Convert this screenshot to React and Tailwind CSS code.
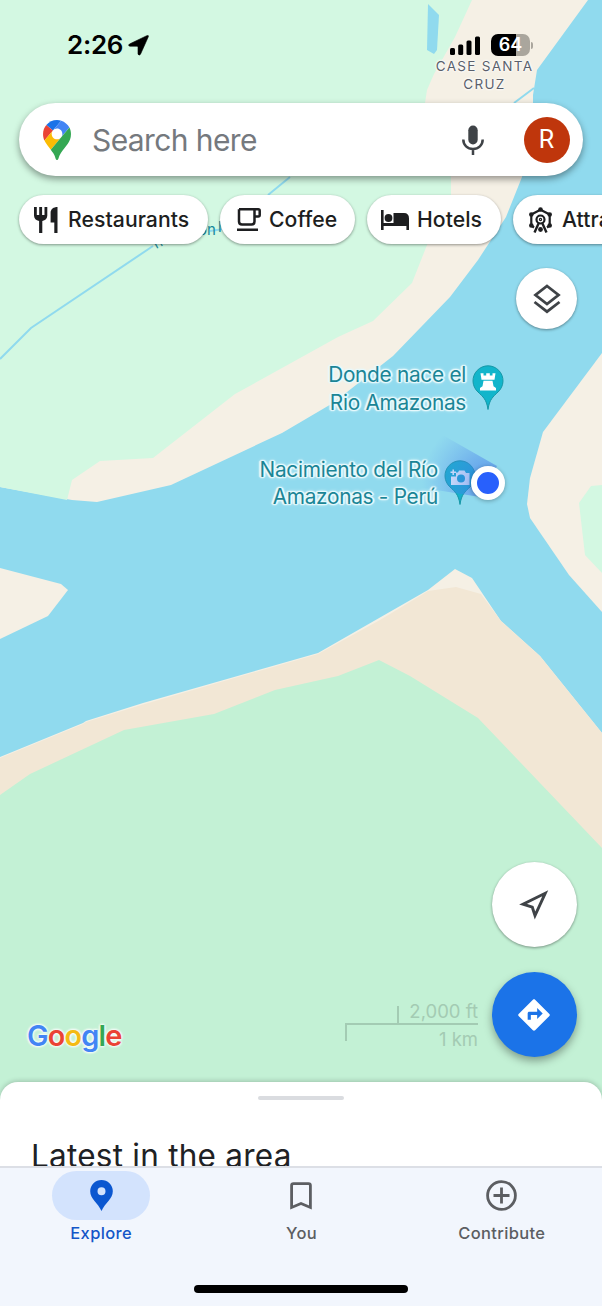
const LABEL = "font-['Inter',sans-serif]";

function MapCanvas() {
  return (
    <svg className="absolute inset-0" width="602" height="1306" viewBox="0 0 602 1306">
      <defs>
        <radialGradient id="beam" gradientUnits="userSpaceOnUse" cx="488" cy="483" r="66">
          <stop offset="0" stopColor="#3b6fe8" stopOpacity="0.65" />
          <stop offset="0.45" stopColor="#4a80ea" stopOpacity="0.4" />
          <stop offset="1" stopColor="#5a90f0" stopOpacity="0" />
        </radialGradient>
      </defs>
      <rect width="602" height="1306" fill="#90daee" />
      <path d="M0 0H588L537 70L533 95V103L522 177L506 217L478 260L450 297L393 356L333 403L282 433L171 485L97 502L72 500L0 487Z" fill="#f5f0e5" />
      <path d="M0 0H472L455 37L434 74L427 90L425 103L451 177V195L427 245L412 283L373 321L338 337L235 394L153 458L100 461L72 480L67 500L0 487Z" fill="#d3f8e2" />
      <path d="M428 4L439 15L437 50L434 54L427 50Z" fill="#90daee" />
      <path d="M0 359L31 328L153 246M210 231L224 229M268 195L290 177M514 103L534 88" fill="none" stroke="#90daee" strokeWidth="2" />
      <path d="M602 353L543 432L530 478L527 504L530 518L569 575L602 612Z" fill="#f5f0e5" />
      <path d="M602 485L591 486L579 503L585 555L602 573Z" fill="#d3f8e2" />
      <path d="M0 568L61 584L68 590L48 616L0 639Z" fill="#f5f0e5" />
      <path d="M0 757L83 723L86 721L143 703L318 653L428 590L455 569L472 578L501 621L540 656L602 733V900H0Z" fill="#f5f0e5" />
      <path d="M0 758L83 724L86 722L143 704.500L200 688L318 654L380 620L428 591L456 587L481 594L501 621L540 656L602 733V900H0Z" fill="#f2e7d5" />
      <path d="M0 795L30 774L124 730L214 714L275 690L338 676L379 660L410 676L478 718L602 848V1306H0Z" fill="#c3f1d5" />

      <g transform="translate(488 366)">
        <path d="M0 43.500C-1.500 33 -5 31 -10 26A15 15 0 1 1 10 26C5 31 1.500 33 0 43.500Z" fill="#12b5cb" stroke="#1697a6" strokeWidth="1" />
        <path d="M-7.500 7.300h3v2.200h2.700V7.300h3.600v2.200h2.700V7.300h3l-1 6.400h-13ZM-4.500 14.700h9L5.500 20.300L8 22V24.500H-8V22L-5.500 20.300Z" fill="#fff" />
      </g>
      <g transform="translate(460 461)">
        <path d="M0 43.500C-1.500 33 -5 31 -10 26A15 15 0 1 1 10 26C5 31 1.500 33 0 43.500Z" fill="#14b0cb" stroke="#1697a6" strokeWidth="1" />
        <path d="M-9 15.500H-4V11.500H-2L-1 9.500H4.500L6 12H9.500V24H-9Z" fill="#fff" />
        <path d="M-6.800 8.500v5.600M-9.500 11.300h5.500" stroke="#fff" strokeWidth="1.500" />
        <circle cx="1" cy="17.500" r="4" fill="#14a6cb" />
      </g>
      <path d="M488 483L497 466L425 425L405 485L480 497Z" fill="url(#beam)" />
    </svg>
  );
}

function MapLabels() {
  const halo = "[text-shadow:0_0_2px_#e8f9fc,0_0_3px_#e8f9fc,0_0_4px_#e8f9fc,1px_1px_1px_#e8f9fc,-1px_-1px_1px_#e8f9fc,1px_-1px_1px_#e8f9fc,-1px_1px_1px_#e8f9fc,2px_0_1px_#e8f9fc,-2px_0_1px_#e8f9fc]";
  const softHalo = "[text-shadow:0_0_2px_#fff,0_0_3px_#fff,0_0_3px_#fff]";
  return (
    <div className={`absolute inset-0 ${LABEL}`}>
      <div className={`absolute left-[426px] top-[58px] w-[117px] text-center text-[13.500px] leading-[17.500px] tracking-[1.300px] text-[#5a5f6b] ${softHalo}`}>
        CASE SANTA
        <br />
        CRUZ
      </div>
      <div className="absolute left-[198px] top-[221px] text-[15px] leading-[18px] text-[#168a9c]">on</div>
      <div className="absolute left-[218px] top-[218px] text-[15px] leading-[18px] text-[#168a9c]">l</div>
      <div className="absolute left-[151px] top-[235px] -rotate-[28deg] text-[13px] leading-[16px] text-[#168a9c]">Tr</div>
      <div className={`absolute right-[136px] top-[361px] whitespace-nowrap text-right text-[20.800px] leading-[27.500px] tracking-[-0.280px] text-[#1a8596] ${halo}`}>
        Donde nace el
        <br />
        Rio Amazonas
      </div>
      <div className={`absolute right-[164px] top-[456px] whitespace-nowrap text-right text-[20.800px] leading-[27px] tracking-[-0.280px] text-[#1a8596] ${halo}`}>
        Nacimiento del Río
        <br />
        Amazonas - Perú
      </div>
      <div className="absolute left-[471px] top-[466px] size-[34px] rounded-full border-[6.500px] border-white bg-[#2860fc] shadow-[0_1px_4px_rgba(0,0,0,0.3)]" />
    </div>
  );
}

function StatusBar() {
  return (
    <header className="flex h-[103px] shrink-0 items-start justify-between pl-[67px] pr-[69px] pt-[31px]">
      <div className="flex items-center gap-[5px] font-['Inter',sans-serif] text-[26px] font-semibold leading-[28px] text-black">
        <span className="tracking-[-0.300px]">2:26</span>
        <svg width="21" height="21" viewBox="0 0 21 21">
          <path d="M20.300 1.800L12.500 19.200Q11.300 21 10 19.200V12.200Q10 11.200 9 11.200H1.800Q-0.500 10.500 1.500 9L18.800 0.700Q21 0 20.300 1.800Z" fill="#000" stroke="#000" strokeWidth="0.600" />
        </svg>
      </div>
      <div className="flex items-center gap-[11px] pt-[3px]">
        <svg width="30" height="20" viewBox="0 0 30 20">
          <rect x="0" y="13" width="5" height="7" rx="1.500" />
          <rect x="8.200" y="9.500" width="5" height="10.500" rx="1.500" />
          <rect x="16.500" y="5.500" width="5" height="14.500" rx="1.500" />
          <rect x="25" y="1.500" width="5" height="18.500" rx="1.500" />
        </svg>
        <div className="flex items-center gap-[1px]">
          <div className="flex h-[22px] w-[39px] items-center justify-center rounded-[7px] bg-[linear-gradient(90deg,#000_64%,#aaa69d_64%)] font-['Inter',sans-serif] text-[18px] font-semibold leading-none text-white">
            64
          </div>
          <div className="h-[7px] w-[2px] rounded-r-full bg-[#aaa69d]" />
        </div>
      </div>
    </header>
  );
}

function MapsLogo() {
  return (
    <svg width="28" height="40" viewBox="0 0 92.300 132.300">
      <path fill="#1a73e8" d="M60.200 2.200C55.800.8 51 0 46.100 0 32 0 19.300 6.400 10.800 16.500l21.800 18.300L60.200 2.200z" />
      <path fill="#ea4335" d="M10.800 16.500C4.100 24.500 0 34.900 0 46.100c0 8.700 1.700 15.700 4.600 22l28-33.300-21.800-18.300z" />
      <path fill="#4285f4" d="M46.200 28.500c9.800 0 17.700 7.900 17.700 17.700 0 4.300-1.600 8.300-4.200 11.400 0 0 13.900-16.600 27.500-32.700-5.600-10.800-15.300-19-27-22.700L32.600 34.800c3.300-3.800 8.100-6.300 13.600-6.300" />
      <path fill="#fbbc04" d="M46.200 63.800c-9.800 0-17.700-7.900-17.700-17.700 0-4.300 1.500-8.300 4.100-11.300l-28 33.300c4.800 10.600 12.800 19.200 21 29.900l34.100-40.500c-3.300 3.900-8.100 6.300-13.500 6.300" />
      <path fill="#34a853" d="M59.100 109.200c15.400-24.100 33.300-35 33.300-63 0-7.700-1.900-14.900-5.200-21.300L25.600 98c2.600 3.400 5.300 7.300 7.900 11.300 9.400 14.500 6.800 23.100 12.800 23.100s3.400-8.700 12.800-23.200" />
    </svg>
  );
}

function SearchBar() {
  return (
    <div className="mx-[19px] flex h-[73px] shrink-0 items-center rounded-full bg-white pl-[24px] pr-[13px] shadow-[0_3px_7px_rgba(0,0,0,0.4)]">
      <MapsLogo />
      <span className={`ml-[21px] flex-1 text-[30px] leading-[38px] tracking-[-0.600px] text-[#75797e] ${LABEL}`}>Search here</span>
      <svg width="22" height="30" viewBox="0 0 22 30" fill="none" className="mr-[40px]">
        <rect x="6.300" y="0.500" width="9.400" height="19" rx="4.700" fill="#3f4347" />
        <path d="M1.300 14.500C1.300 20 5.500 24 11 24S20.700 20 20.700 14.500M11 24V30" stroke="#3f4347" strokeWidth="2.500" />
      </svg>
      <div className="flex size-[46px] items-center justify-center rounded-full bg-[#bf360c] pr-px font-['Roboto',sans-serif] text-[25px] text-white">R</div>
    </div>
  );
}

function ForkIcon() {
  return (
    <svg width="24" height="26" viewBox="0 0 24 26">
      <path d="M0 0h2.800v8h2.400V0h2.900v8h2.400V0h2.800v8.500c0 3-2 5-5 5.400V26H5.100V13.900C2 13.500 0 11.500 0 8.500ZM23.500 0v26h-3.200V15.500H16.600V6c0-4 3-6 6.900-6Z" fill="#1d1e20" />
    </svg>
  );
}
function CupIcon() {
  return (
    <svg width="24" height="23" viewBox="0 0 24 23" fill="none" stroke="#1d1e20" strokeWidth="2.500">
      <path d="M2 1.300H21.200Q22.700 1.300 22.700 2.800V7Q22.700 8.500 21.200 8.500H17.500M17.500 1.300V13.500Q17.500 16.500 14.500 16.500H5Q2 16.500 2 13.500V1.300M0 21.700H21" />
    </svg>
  );
}
function BedIcon() {
  return (
    <svg width="28" height="20" viewBox="0 0 28 20" fill="#1d1e20">
      <path d="M0 0h2.600v13H12.500V3h10.500Q28 3 28 8.500V20h-2.600v-4H2.600v4H0Z" />
      <circle cx="7.500" cy="8" r="3.900" />
    </svg>
  );
}
function WheelIcon() {
  return (
    <svg width="25" height="26" viewBox="0 0 24 26" fill="none" stroke="#1d1e20" strokeWidth="2.200">
      <path d="M5.500 20.500L2.800 18.500V7.500L12 2.700L21.200 7.500V18.500L18.500 20.500" />
      <circle cx="12" cy="12.500" r="4" />
      <circle cx="12" cy="12.500" r="0.600" />
      <path d="M10.500 15.500L6 25.500M13.500 15.500L18 25.500" strokeWidth="2.400" />
      <g fill="#1d1e20" stroke="none">
        <circle cx="12" cy="2.500" r="2.300" />
        <circle cx="2.800" cy="7.500" r="2.300" />
        <circle cx="21.200" cy="7.500" r="2.300" />
        <circle cx="2.800" cy="18.500" r="2.300" />
        <circle cx="21.200" cy="18.500" r="2.300" />
        <circle cx="12" cy="22.500" r="2.400" />
      </g>
    </svg>
  );
}

function Chip({ icon, label, className }) {
  return (
    <button className={`flex h-[49px] shrink-0 items-center whitespace-nowrap rounded-full bg-white font-['Inter',sans-serif] text-[21.200px] font-medium tracking-[0.050px] text-[#1d1e20] shadow-[0_1px_3px_rgba(0,0,0,0.4)] ${className}`}>
      {icon}
      <span>{label}</span>
    </button>
  );
}

function Chips() {
  return (
    <div className="mt-[19px] flex gap-[12px] pl-[19px]">
      <Chip icon={<ForkIcon />} label="Restaurants" className="w-[189px] gap-[10px] pl-[15px]" />
      <Chip icon={<CupIcon />} label="Coffee" className="w-[135px] gap-[8px] pl-[17px]" />
      <Chip icon={<BedIcon />} label="Hotels" className="w-[134px] gap-[8px] pl-[14px]" />
      <Chip icon={<WheelIcon />} label="Attractions" className="w-[190px] gap-[9px] pl-[15px]" />
    </div>
  );
}

function GoogleMark() {
  const letters = [
    ["G", "text-[#4285f4]"],
    ["o", "text-[#ea4335]"],
    ["o", "text-[#f4bb14]"],
    ["g", "text-[#4285f4]"],
    ["l", "text-[#34a853]"],
    ["e", "text-[#ea4335]"],
  ];
  return (
    <div className={`text-[29px] font-semibold leading-[36px] tracking-[-0.900px] ${LABEL} [text-shadow:0_0_3px_#fff,0_0_3px_#fff,0_0_3px_#fff]`}>
      {letters.map(([ch, color], i) => (
        <span key={i} className={color}>{ch}</span>
      ))}
    </div>
  );
}

function ScaleBar() {
  return (
    <div className="flex w-[133px] flex-col text-right font-['Inter',sans-serif] text-[18.500px] leading-[24px] text-[#a3cbb3]">
      <div className="flex items-end justify-between pl-[52px]">
        <div className="h-[17px] w-[2px] bg-[#a3cbb3]" />
        <span>2,000 ft</span>
      </div>
      <div className="h-[18px] border-l-2 border-t-2 border-[#a3cbb3] pt-[2px]">1 km</div>
    </div>
  );
}

function NavItem({ icon, label, active }) {
  return (
    <div className="flex flex-1 flex-col items-center">
      <div className={`flex h-[49px] w-[98px] items-center justify-center rounded-full ${active ? "bg-[#d3e3fd]" : ""}`}>{icon}</div>
      <span className={`mt-[3px] font-['Inter',sans-serif] text-[16.500px] font-medium leading-[20px] tracking-[0.350px] ${active ? "text-[#1456c8]" : "text-[#5c5e62]"}`}>{label}</span>
    </div>
  );
}

export default function App() {
  return (
    <div className="relative h-[1306px] w-[602px] overflow-hidden">
      <MapCanvas />
      <MapLabels />
      <div className="relative flex h-full flex-col">
        <StatusBar />
        <SearchBar />
        <Chips />
        <button className="ml-[516px] mt-[24px] flex size-[61px] shrink-0 items-center justify-center rounded-full bg-white shadow-[0_1px_3px_rgba(0,0,0,0.4)]">
          <svg width="28" height="30" viewBox="0 0 28 30" fill="none" stroke="#3f4347" strokeWidth="2.800">
            <path d="M14 2L25.500 11L14 20L2.500 11ZM1.500 18L14 27.700L26.500 18" />
          </svg>
        </button>
        <div className="flex-1" />
        <div className="flex h-[220px] items-end justify-between pb-[25px] pl-[27px] pr-[25px]">
          <div className="flex-1 pb-[3px]"><GoogleMark /></div>
          <div className="mb-[16px] mr-[14px]"><ScaleBar /></div>
          <div className="flex flex-col gap-[25px]">
            <button className="flex size-[85px] items-center justify-center rounded-full bg-white pr-px shadow-[0_1px_3px_rgba(0,0,0,0.4)]">
              <svg width="30" height="30" viewBox="0 0 30 30" fill="none" stroke="#3f4347" strokeWidth="2.900">
                <path d="M26.200 3.300L16 25.500L13.300 17.200L4 14.200Z" />
              </svg>
            </button>
            <button className="flex size-[85px] items-center justify-center rounded-full bg-[#1b73e8] pr-px shadow-[0_4px_8px_rgba(0,0,0,0.35)]">
              <svg width="38" height="38" viewBox="0 0 24 24" fill="#fff">
                <path d="M21.710 11.290l-9-9c-.39-.39-1.020-.39-1.410 0l-9 9c-.39.39-.39 1.020 0 1.410l9 9c.39.39 1.020.39 1.410 0l9-9c.39-.38.39-1.010 0-1.410zM14 14.500V12h-4v3H8v-4c0-.55.45-1 1-1h5V7.500l3.500 3.500-3.500 3.500z" />
              </svg>
            </button>
          </div>
        </div>
        <section className="flex h-[84px] shrink-0 flex-col items-center overflow-hidden rounded-t-[18px] bg-white pt-[14px] shadow-[0_-1px_5px_rgba(0,0,0,0.2)]">
          <div className="mr-px h-[4px] w-[86px] shrink-0 rounded-full bg-[#dadce0]" />
          <h2 className={`mt-[36px] self-start pl-[31px] text-[31.500px] leading-[40px] tracking-[0.240px] text-[#202124] ${LABEL}`}>Latest in the area</h2>
        </section>
        <nav className="flex h-[140px] shrink-0 flex-col border-t-2 border-[#dcdfe6] bg-[#f2f6fd]">
          <div className="flex pl-px pt-[3px]">
            <NavItem
              active
              label="Explore"
              icon={
                <svg width="23" height="31" viewBox="0 0 23 31" fill="#0b57d0" fillRule="evenodd">
                  <path d="M11.500 0A11.300 11.300 0 0 0 .2 11.300C.2 19 8 23 11.500 31C15 23 22.800 19 22.800 11.300A11.300 11.300 0 0 0 11.500 0ZM11.500 7.300A4 4 0 1 1 11.500 15.300A4 4 0 1 1 11.500 7.300Z" />
                </svg>
              }
            />
            <NavItem
              label="You"
              icon={
                <svg width="22" height="28" viewBox="0 0 22 28" fill="none" stroke="#5c5e62" strokeWidth="2.800">
                  <path d="M1.600 25.500V3.500Q1.600 1.600 3.500 1.600H18.500Q20.400 1.600 20.400 3.500V25.500L11 21.500Z" />
                </svg>
              }
            />
            <NavItem
              label="Contribute"
              icon={
                <svg width="31" height="31" viewBox="0 0 31 31" fill="none" stroke="#5c5e62" strokeWidth="2.800">
                  <circle cx="15.500" cy="15.500" r="13.900" />
                  <path d="M15.500 7.500V23.500M7.500 15.500H23.500" />
                </svg>
              }
            />
          </div>
          <div className="mx-auto mt-[42px] h-[8px] w-[214px] rounded-full bg-black" />
        </nav>
      </div>
    </div>
  );
}
